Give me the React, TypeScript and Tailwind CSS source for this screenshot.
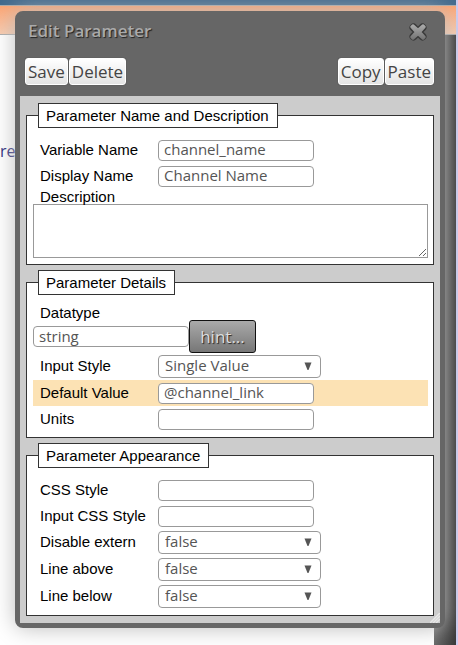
import { useId, useState } from 'react';
import { clsx } from 'clsx';

const field =
  'rounded-sm border border-[#999] bg-white pb-0.5 font-["Open_Sans","Noto_Sans",sans-serif] text-[15px] leading-[19px] text-[#555] outline-none';

type ToolButtonProps = {
  children: React.ReactNode;
};

function ToolButton({ children }: ToolButtonProps) {
  return (
    <button
      type="button"
      className="h-[27px] rounded-[3px] border border-white bg-linear-to-b from-white to-[#e4e4e4] px-0.5 text-[17px] leading-6 text-[#444] shadow-[0_0_1px_#333]"
    >
      {children}
    </button>
  );
}

type SectionProps = {
  title: string;
  children: React.ReactNode;
};

function Section({ title, children }: SectionProps) {
  return (
    <fieldset className="min-w-0 border border-[#333] bg-white pr-[5px] pb-[5px] pl-1.5">
      <legend className="ml-[5px] border border-[#333] bg-white pr-2 pl-[7px] text-[15px] leading-[23px]">
        {title}
      </legend>
      {children}
    </fieldset>
  );
}

type TextRowProps = {
  label: string;
  value?: string;
  highlight?: boolean;
};

function TextRow({ label, value = '', highlight }: TextRowProps) {
  const id = useId();
  const [text, setText] = useState(value);
  return (
    <div className={clsx('flex h-[26px] items-center pl-[7px]', highlight && 'bg-[#fce2b4]')}>
      <label htmlFor={id} className="w-[118px] shrink-0">
        {label}
      </label>
      <input
        id={id}
        value={text}
        onChange={(e) => setText(e.target.value)}
        className={clsx(field, 'h-[21px] w-[156px] px-[5px]')}
      />
    </div>
  );
}

type SelectRowProps = {
  label: string;
  options: string[];
};

function SelectRow({ label, options }: SelectRowProps) {
  const id = useId();
  return (
    <div className="flex h-[27px] items-center pl-[7px]">
      <label htmlFor={id} className="w-[118px] shrink-0 pb-0.5">
        {label}
      </label>
      <div className="relative">
        <select id={id} className={clsx(field, 'block h-[23px] w-[163px] appearance-none px-1.5')}>
          {options.map((o) => (
            <option key={o}>{o}</option>
          ))}
        </select>
        <svg
          viewBox="0 0 8 8"
          className="pointer-events-none absolute top-[7px] right-[9px] size-2 fill-[#555]"
          aria-hidden="true"
        >
          <path d="M0.5 0.5h7L4.5 8h-1z" />
        </svg>
      </div>
    </div>
  );
}

function CloseIcon() {
  return (
    <svg viewBox="0 0 20 20" className="size-5" aria-hidden="true">
      <defs>
        <linearGradient id="close-fill" x1="0" y1="0" x2="0" y2="1">
          <stop offset="0" stopColor="#a8a8a8" />
          <stop offset="1" stopColor="#777" />
        </linearGradient>
      </defs>
      <path
        d="M5.5 5.5l9 9M14.5 5.5l-9 9"
        stroke="#3a3a3a"
        strokeWidth="8"
        strokeLinecap="round"
      />
      <path
        d="M5 3.5 3.5 5 8 10l-4.500 5L5 16.500 10 12l5 4.500 1.500-1.500L12 10l4.500-5L15 3.500 10 8z"
        fill="url(#close-fill)"
        stroke="url(#close-fill)"
        strokeWidth="2.5"
        strokeLinejoin="round"
      />
    </svg>
  );
}

function PageBehind() {
  return (
    <div className="absolute inset-0 flex flex-col overflow-hidden border-r-2 border-[#ccccf0]">
      <div className="h-[5px] bg-[#41698c]" />
      <div className="h-[30px] border-y border-[#aaa] bg-linear-to-b from-[#fca472] to-[#f9cbae]" />
      <div className="flex flex-1 justify-between">
        <span className="pt-[104px] text-base text-[#227]">re</span>
        <div className="w-[22px] bg-linear-to-r from-[#666] to-[#383838]" />
      </div>
    </div>
  );
}

export default function App() {
  const datatypeId = useId();
  const descriptionId = useId();
  const [datatype, setDatatype] = useState('string');

  return (
    <div className="relative min-h-screen bg-white px-[15px] pt-[11px] pb-[17px] font-['Open_Sans','Noto_Sans',sans-serif]">
      <PageBehind />
      <div
        role="dialog"
        aria-labelledby="dialog-title"
        className="relative mr-[-2px] rounded-lg border-[5px] border-[#666] bg-[#666] shadow-[0_0_22px_#bbb]"
      >
        <header className="flex h-[31px] items-center justify-between pr-3 pl-2">
          <h1
            id="dialog-title"
            className="pb-0.5 text-[17px] leading-6 font-semibold text-[#aaa] [text-shadow:1px_1px_1px_#222]"
          >
            Edit Parameter
          </h1>
          <button type="button" aria-label="Close">
            <CloseIcon />
          </button>
        </header>
        <div className="flex justify-between py-[11px] pr-1.5 pl-[5px]">
          <div className="flex gap-px">
            <ToolButton>Save</ToolButton>
            <ToolButton>Delete</ToolButton>
          </div>
          <div className="flex gap-px">
            <ToolButton>Copy</ToolButton>
            <ToolButton>Paste</ToolButton>
          </div>
        </div>
        <form
          className="relative flex flex-col gap-[5px] bg-[#ccc] px-1.5 py-[7px] font-['Liberation_Sans',Arial,sans-serif] text-[15px] leading-4 text-black"
          onSubmit={(e) => e.preventDefault()}
        >
          <Section title="Parameter Name and Description">
            <div className="pt-[9px] pb-px">
              <TextRow label="Variable Name" value="channel_name" />
              <TextRow label="Display Name" value="Channel Name" />
              <label htmlFor={descriptionId} className="block h-[15px] pl-[7px]">
                Description
              </label>
              <textarea
                id={descriptionId}
                className="block h-[54px] w-full resize border border-[#999] bg-white outline-none"
              />
            </div>
          </Section>
          <Section title="Parameter Details">
            <div className="pt-[10px]">
              <label htmlFor={datatypeId} className="block h-[15px] pl-[7px]">
                Datatype
              </label>
              <div className="flex h-[33px] items-center">
                <input
                  id={datatypeId}
                  value={datatype}
                  onChange={(e) => setDatatype(e.target.value)}
                  className={clsx(field, 'h-[21px] w-[156px] px-[5px]')}
                />
                <button
                  type="button"
                  className="h-[33px] w-[67px] rounded-[3px] border border-[#111] bg-linear-to-b from-[#aaa] to-[#777] font-['Open_Sans','Noto_Sans',sans-serif] text-[17px] text-[#ddd] [text-shadow:1px_1px_1px_#222]"
                >
                  hint...
                </button>
              </div>
              <SelectRow label="Input Style" options={['Single Value', 'Multiple Values']} />
              <TextRow label="Default Value" value="@channel_link" highlight />
              <TextRow label="Units" />
            </div>
          </Section>
          <Section title="Parameter Appearance">
            <div className="pt-[9px]">
              <TextRow label="CSS Style" />
              <TextRow label="Input CSS Style" />
              <SelectRow label="Disable extern" options={['false', 'true']} />
              <SelectRow label="Line above" options={['false', 'true']} />
              <SelectRow label="Line below" options={['false', 'true']} />
            </div>
          </Section>
          <svg viewBox="0 0 10 10" className="absolute right-0 bottom-0 size-2.5" aria-hidden="true">
            <path d="M0 10 10 0M3 10l7-7M6 10l4-4" stroke="#e8e8e8" strokeWidth="1.5" />
          </svg>
        </form>
      </div>
    </div>
  );
}
